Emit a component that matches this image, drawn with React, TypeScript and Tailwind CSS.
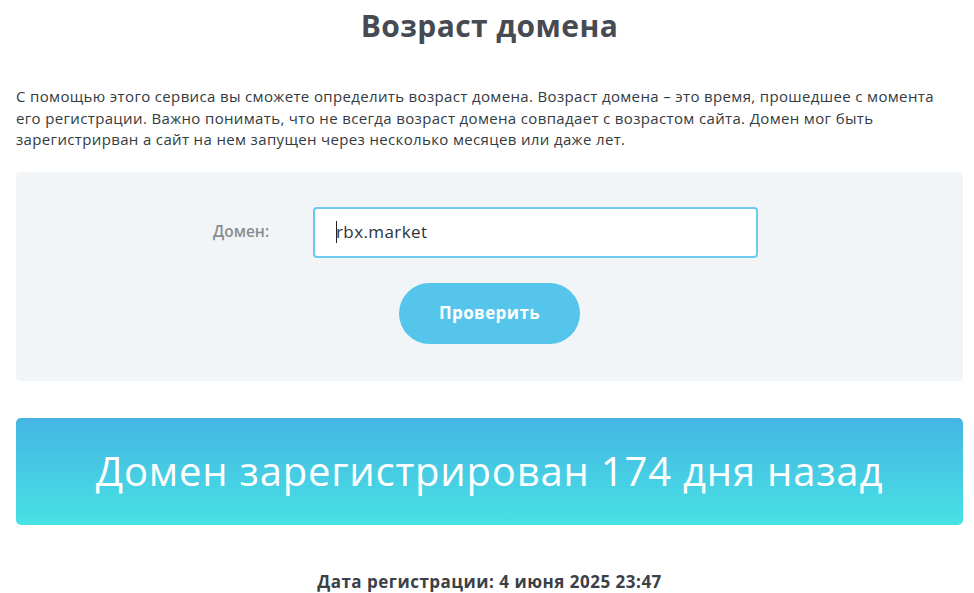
export default function App() {
  return (
    <div className="min-h-screen bg-white pl-4 pr-[11px] font-['Open_Sans',sans-serif]">
      <h1 className="pt-[6px] text-center text-[30px] font-bold leading-[40px] tracking-[0.4px] text-[#464b53]">
        Возраст домена
      </h1>

      <p className="mt-[40px] text-[15px] leading-[21.5px] tracking-[0.35px] text-[#333a40]">
        С помощью этого сервиса вы сможете определить возраст домена. Возраст домена – это время, прошедшее с момента
        <br />
        его регистрации. Важно понимать, что не всегда возраст домена совпадает с возрастом сайта. Домен мог быть
        <br />
        зарегистрирван а сайт на нем запущен через несколько месяцев или даже лет.
      </p>

      <div className="mt-[21px] flex h-[209px] flex-col items-center rounded-[4px] bg-[#f2f5f7] pt-[35px]">
        <div className="mr-[8px] flex items-center">
          <label className="w-[100px] text-[15.5px] font-semibold text-[#8a8d90]">Домен:</label>
          <div className="flex h-[51px] w-[445px] items-center rounded-[4px] border-2 border-[#6ccbec] bg-white pl-[21px] text-[17px] tracking-[0.4px] text-[#2d3339]">
            <span className="mr-[-1px] h-[22px] w-px bg-[#222]" />
            rbx.market
          </div>
        </div>
        <button className="mt-[25px] h-[61px] w-[181px] rounded-full bg-[#56c5ec] text-[17px] font-bold tracking-[0.4px] text-white">
          Проверить
        </button>
      </div>

      <div className="mt-[37px] flex h-[107px] items-center justify-center rounded-[5px] bg-gradient-to-b from-[#45b5e3] to-[#48e2e4]">
        <span className="text-[40px] font-normal tracking-[0.8px] text-white">Домен зарегистрирован 174 дня назад</span>
      </div>

      <div className="mt-[44px] text-center text-[17px] font-bold tracking-[0.5px] text-[#3b4046]">
        Дата регистрации: 4 июня 2025 23:47
      </div>
    </div>
  );
}
